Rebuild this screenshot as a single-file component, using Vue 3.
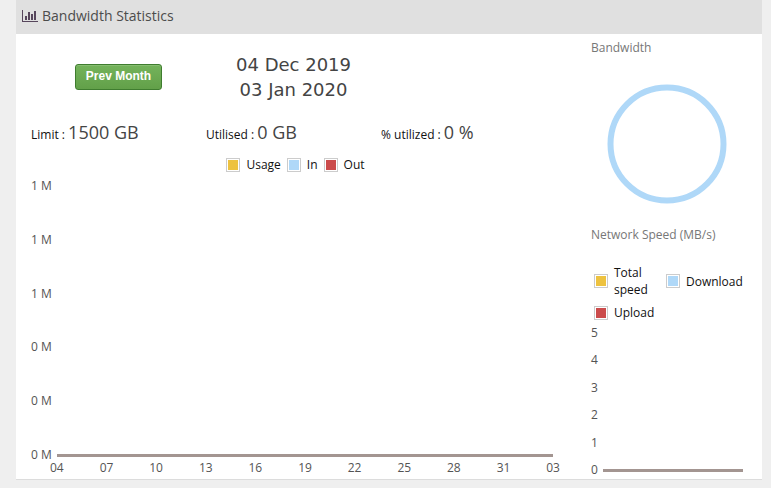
<script setup>
const metrics = [
  { label: 'Limit :', value: '1500 GB' },
  { label: 'Utilised :', value: '0 GB' },
  { label: '% utilized :', value: '0 %' },
]
const usageLegend = [
  { label: 'Usage', tone: 'yellow' },
  { label: 'In', tone: 'blue' },
  { label: 'Out', tone: 'red' },
]
const speedLegend = [
  { label: 'Total speed', tone: 'yellow' },
  { label: 'Download', tone: 'blue' },
  { label: 'Upload', tone: 'red' },
]
const usageTicks = ['1 M', '1 M', '1 M', '0 M', '0 M', '0 M']
const dayTicks = ['04', '07', '10', '13', '16', '19', '22', '25', '28', '31', '03']
const speedTicks = ['5', '4', '3', '2', '1', '0']
</script>

<template>
  <section class="panel">
    <header class="panel-header">
      <svg class="chart-icon" viewBox="0 0 16 12" aria-hidden="true">
        <path d="M0 0h1v11h15v1H0z" />
        <path d="M3 6h2v4H3zM6 2h2v8H6zM9 4h2v6H9zM12 1h2v9h-2z" />
      </svg>
      <h1>Bandwidth Statistics</h1>
    </header>

    <div class="panel-body">
      <div class="usage">
        <div class="columns period">
          <button type="button" class="prev">Prev Month</button>
          <div class="dates">
            <div>04 Dec 2019</div>
            <div>03 Jan 2020</div>
          </div>
        </div>

        <div class="columns metrics">
          <div v-for="m in metrics" :key="m.label">
            {{ m.label }} <span class="value">{{ m.value }}</span>
          </div>
        </div>

        <ul class="legend">
          <li v-for="item in usageLegend" :key="item.label">
            <span class="swatch" :class="item.tone"></span>{{ item.label }}
          </li>
        </ul>

        <div class="chart usage-chart">
          <div class="y-axis">
            <span v-for="(t, i) in usageTicks" :key="i">{{ t }}</span>
          </div>
          <div class="plot"></div>
        </div>
        <div class="x-axis">
          <span v-for="d in dayTicks" :key="d">{{ d }}</span>
        </div>
      </div>

      <aside class="side">
        <h2>Bandwidth</h2>
        <svg class="ring" viewBox="0 0 120 120" aria-hidden="true">
          <circle cx="60" cy="60" r="56.5" />
        </svg>
        <h2>Network Speed (MB/s)</h2>
        <ul class="speed-legend">
          <li v-for="item in speedLegend" :key="item.label">
            <span class="swatch" :class="item.tone"></span><span>{{ item.label }}</span>
          </li>
        </ul>
        <div class="chart speed-chart">
          <div class="y-axis">
            <span v-for="t in speedTicks" :key="t">{{ t }}</span>
          </div>
          <div class="plot"></div>
        </div>
      </aside>
    </div>
  </section>
</template>

<style>
body {
  background: #efefef;
}
</style>

<style scoped>
.panel {
  margin: 0 9px 8px 16px;
  background: #fff;
  border-bottom: 1px solid #dcdcdc;
  font: 12px/18px "Open Sans", sans-serif;
  color: #111;
}
.panel-header {
  display: flex;
  align-items: center;
  gap: 4px;
  height: 34px;
  padding: 0 6px 2px;
  box-sizing: border-box;
  background: #e0e0e0;
}
.chart-icon {
  width: 16px;
  height: 12px;
  fill: #57465c;
}
h1 {
  margin: 0;
  font-size: 14px;
  line-height: 20px;
  font-weight: 400;
  color: #4c4c4c;
}
.panel-body {
  display: grid;
  grid-template-columns: minmax(0, 1fr) 152px;
  gap: 31px;
  padding: 0 19px 0 15px;
}
.columns {
  display: grid;
  grid-template-columns: repeat(3, 1fr);
  padding-right: 4px;
}
.period {
  padding-top: 18px;
  align-items: center;
  justify-items: center;
}
.prev {
  width: 87px;
  height: 26px;
  padding: 0 0 2px;
  border: 1px solid #3f7d2f;
  border-radius: 3px;
  background: linear-gradient(#74b35b, #62a049);
  box-shadow: inset 0 1px 0 #86bd70;
  color: #fff;
  font: bold 12px/16px "Liberation Sans", sans-serif;
  cursor: pointer;
}
.dates {
  font: 18px/25px "DejaVu Sans", sans-serif;
  color: #444;
  text-align: center;
}
.metrics {
  padding-top: 17px;
  line-height: 26px;
  white-space: nowrap;
}
.value {
  font-size: 18px;
  color: #444;
}
ul {
  margin: 0;
  padding: 0;
  list-style: none;
}
li {
  display: flex;
  align-items: center;
  gap: 6px;
}
.legend {
  display: flex;
  justify-content: center;
  gap: 6px;
  padding: 8px 0 3px;
}
.swatch {
  flex: none;
  width: 14px;
  height: 14px;
  box-sizing: border-box;
  padding: 1px;
  border: 1px solid #ccc;
  background-clip: content-box;
}
.yellow {
  background-color: #edc240;
}
.blue {
  background-color: #afd8f8;
}
.red {
  background-color: #cb4b4b;
}
.chart {
  display: flex;
  color: #545454;
}
.y-axis {
  display: flex;
  flex-direction: column;
  justify-content: space-between;
}
.plot {
  flex: 1;
  border-bottom: 3px solid #a39591;
}
.usage-chart {
  height: 287px;
}
.usage-chart .y-axis {
  width: 26px;
}
.usage-chart .plot {
  margin: 0 7px 7px 0;
}
.x-axis {
  display: flex;
  justify-content: space-between;
  margin: -5px 0 0 19px;
  padding-bottom: 2px;
  color: #545454;
}
h2 {
  margin: 0;
  font-size: 12px;
  line-height: 18px;
  font-weight: 400;
  color: #777;
}
.side {
  padding-top: 5px;
}
.ring {
  display: block;
  width: 120px;
  height: 120px;
  margin: 27px auto 22px;
  fill: none;
  stroke: #afd8f8;
  stroke-width: 6;
}
.speed-legend {
  display: grid;
  grid-template-columns: 66px auto;
  gap: 6px;
  padding: 20px 0 3px 3px;
  line-height: 17px;
}
.speed-chart {
  height: 155px;
}
.speed-chart .y-axis {
  width: 12px;
}
.speed-chart .plot {
  margin-bottom: 7px;
}
</style>
